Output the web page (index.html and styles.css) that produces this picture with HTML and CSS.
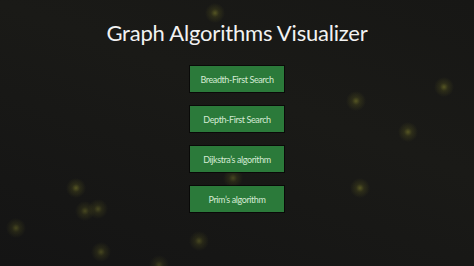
FILE: index.html
```html
<!DOCTYPE html>
<html>
<head>
<meta charset="utf-8">
<link rel="stylesheet" href="styles.css">
</head>
<body>
<main class="app">
  <h1 class="title">Graph Algorithms Visualizer</h1>
  <nav class="menu">
    <button class="algo">Breadth-First Search</button>
    <button class="algo">Depth-First Search</button>
    <button class="algo">Dijkstra’s algorithm</button>
    <button class="algo">Prim’s algorithm</button>
  </nav>
</main>
</body>
</html>
```
FILE: styles.css
```css
html, body {
  margin: 0;
  padding: 0;
  width: 474px;
  height: 266px;
  overflow: hidden;
}
body {
  font-family: "Lato", "Open Sans", sans-serif;
  background-color: #151515;
  background-image:
    radial-gradient(circle at 215px 13px, rgba(110,110,40,0.7) 0, rgba(90,90,30,0.3) 4px, rgba(0,0,0,0) 10px),
    radial-gradient(circle at 356px 101px, rgba(110,110,40,0.7) 0, rgba(90,90,30,0.3) 4px, rgba(0,0,0,0) 10px),
    radial-gradient(circle at 444px 87px, rgba(110,110,40,0.7) 0, rgba(90,90,30,0.3) 4px, rgba(0,0,0,0) 10px),
    radial-gradient(circle at 408px 132px, rgba(110,110,40,0.7) 0, rgba(90,90,30,0.3) 4px, rgba(0,0,0,0) 10px),
    radial-gradient(circle at 360px 188px, rgba(110,110,40,0.7) 0, rgba(90,90,30,0.3) 4px, rgba(0,0,0,0) 10px),
    radial-gradient(circle at 76px 188px, rgba(110,110,40,0.7) 0, rgba(90,90,30,0.3) 4px, rgba(0,0,0,0) 10px),
    radial-gradient(circle at 85px 211px, rgba(110,110,40,0.55) 0, rgba(90,90,30,0.25) 4px, rgba(0,0,0,0) 10px),
    radial-gradient(circle at 98px 209px, rgba(110,110,40,0.55) 0, rgba(90,90,30,0.25) 4px, rgba(0,0,0,0) 10px),
    radial-gradient(circle at 16px 228px, rgba(110,110,40,0.55) 0, rgba(90,90,30,0.25) 4px, rgba(0,0,0,0) 10px),
    radial-gradient(circle at 199px 241px, rgba(110,110,40,0.55) 0, rgba(90,90,30,0.25) 4px, rgba(0,0,0,0) 10px),
    radial-gradient(circle at 101px 252px, rgba(110,110,40,0.55) 0, rgba(90,90,30,0.25) 4px, rgba(0,0,0,0) 10px),
    radial-gradient(circle at 233px 178px, rgba(110,110,40,0.55) 0, rgba(90,90,30,0.25) 4px, rgba(0,0,0,0) 10px),
    radial-gradient(circle at 159px 265px, rgba(110,110,40,0.45) 0, rgba(90,90,30,0.2) 4px, rgba(0,0,0,0) 10px),
    linear-gradient(20deg, #141414 0%, #1a1a17 60%, #171715 100%);
}
.app {
  display: flex;
  flex-direction: column;
  align-items: center;
  padding-top: 19px;
}
.title {
  margin: 0;
  font-family: "Lato", "Open Sans", sans-serif;
  font-weight: 400;
  font-size: 22px;
  line-height: 28px;
  letter-spacing: -0.2px;
  color: #f2f2f2;
}
.menu {
  display: flex;
  flex-direction: column;
  gap: 14px;
  margin-top: 19px;
}
.algo {
  width: 94px;
  height: 26px;
  padding: 0;
  border: 0;
  background: #2b7a3a;
  color: #d4ead4;
  font-family: "Lato", "Open Sans", sans-serif;
  font-size: 9px;
  letter-spacing: -0.4px;
  box-shadow: 0 0 0 1px rgba(0,0,0,0.6);
}
```
